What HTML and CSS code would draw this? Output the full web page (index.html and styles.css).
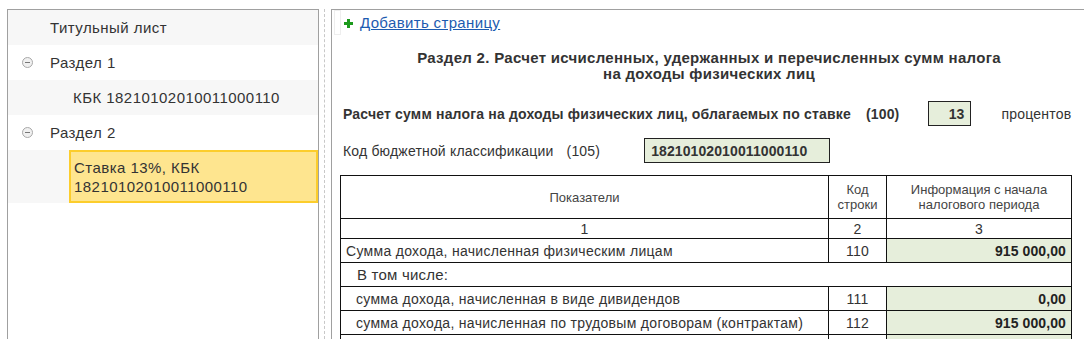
FILE: index.html
```html
<!DOCTYPE html>
<html lang="ru">
<head>
    <meta charset="UTF-8">
    <title>Раздел 2</title>
    <link rel="stylesheet" href="styles.css">
</head>
<body>
    <div class="page">
        <div class="tree">
            <div class="tree-row shaded"><span class="label">Титульный лист</span></div>
            <div class="tree-row"><span class="toggle"></span><span class="label">Раздел 1</span></div>
            <div class="tree-row shaded child"><span class="label">КБК 18210102010011000110</span></div>
            <div class="tree-row"><span class="toggle"></span><span class="label">Раздел 2</span></div>
            <div class="tree-row shaded child selected-row">
                <div class="selected">Ставка 13%, КБК<br>18210102010011000110</div>
            </div>
        </div>
        <div class="splitter"><div class="dash"></div></div>
        <div class="form">
            <div class="toolbar">
                <div class="grip"></div>
                <span class="plus"></span>
                <a href="#" class="add-link">Добавить страницу</a>
            </div>
            <h2 class="form-title">Раздел 2. Расчет исчисленных, удержанных и перечисленных сумм налога<br>на доходы физических лиц</h2>
            <div class="field-line rate">
                <span class="bold">Расчет сумм налога на доходы физических лиц, облагаемых по ставке</span>
                <span class="bold code">(100)</span>
                <span class="input small">13</span>
                <span class="unit">процентов</span>
            </div>
            <div class="field-line kbk">
                <span>Код бюджетной классификации</span>
                <span class="code">(105)</span>
                <span class="input wide">18210102010011000110</span>
            </div>
            <table class="report">
                <thead>
                    <tr class="head">
                        <th class="c1">Показатели</th>
                        <th class="c2">Код<br>строки</th>
                        <th class="c3">Информация с начала<br>налогового периода</th>
                    </tr>
                    <tr class="nums">
                        <td>1</td>
                        <td>2</td>
                        <td>3</td>
                    </tr>
                </thead>
                <tbody>
                    <tr>
                        <td class="name">Сумма дохода, начисленная физическим лицам</td>
                        <td class="num">110</td>
                        <td class="value">915 000,00</td>
                    </tr>
                    <tr>
                        <td class="group" colspan="3">В том числе:</td>
                    </tr>
                    <tr>
                        <td class="name sub">сумма дохода, начисленная в виде дивидендов</td>
                        <td class="num">111</td>
                        <td class="value">0,00</td>
                    </tr>
                    <tr>
                        <td class="name sub">сумма дохода, начисленная по трудовым договорам (контрактам)</td>
                        <td class="num">112</td>
                        <td class="value">915 000,00</td>
                    </tr>
                    <tr>
                        <td class="name sub">&nbsp;</td>
                        <td class="num"></td>
                        <td class="value"></td>
                    </tr>
                </tbody>
            </table>
        </div>
    </div>
</body>
</html>
```

FILE: styles.css
```css
body {
    margin: 0;
    background: #fff;
    font-family: "Liberation Sans", Arial, sans-serif;
    color: #333;
    overflow: hidden;
}
.page {
    display: flex;
    height: 339px;
    padding: 9px 0 0 7px;
    box-sizing: border-box;
}
.tree {
    width: 312px;
    flex: none;
    border: 1px solid #a0a0a0;
    border-bottom: none;
    box-sizing: border-box;
}
.tree-row {
    display: flex;
    align-items: center;
    height: 35px;
    padding-left: 42px;
    font-size: 15px;
    letter-spacing: 0.45px;
    color: #333;
    position: relative;
}
.tree-row.shaded {
    background: #f7f7f7;
}
.tree-row.child {
    padding-left: 65px;
}
.toggle {
    position: absolute;
    left: 14px;
    top: 12px;
    width: 9px;
    height: 9px;
    border: 1px solid #a8a8a8;
    border-radius: 50%;
    background: #f0f0f0;
}
.toggle::after {
    content: "";
    position: absolute;
    left: 2px;
    top: 4px;
    width: 5px;
    height: 1px;
    background: #777;
}
.tree-row.selected-row {
    height: 53px;
    padding-left: 61px;
    align-items: stretch;
}
.selected {
    flex: 1;
    background: #fee58f;
    border: 2px solid #fccd2c;
    padding: 6px 3px 4px 3px;
    line-height: 19px;
    font-size: 15px;
    color: #333;
}
.splitter {
    width: 12px;
    flex: none;
    display: flex;
    justify-content: center;
}
.dash {
    width: 0;
    border-left: 1px dashed #c8c8c8;
    margin-left: -1px;
}
.form {
    flex: 1;
    border-left: 1px solid #a0a0a0;
    border-top: 1px solid #a0a0a0;
    padding-left: 2px;
}
.toolbar {
    display: flex;
    align-items: center;
    height: 25px;
}
.grip {
    width: 5px;
    height: 23px;
    border: 1px solid #eee;
    background: #fff;
    margin-right: 3px;
    align-self: flex-start;
}
.plus {
    width: 9px;
    height: 9px;
    position: relative;
    margin-right: 7px;
    margin-top: 1px;
}
.plus::before, .plus::after {
    content: "";
    position: absolute;
    background: #1c9a1c;
}
.plus::before {
    left: 0;
    top: 3px;
    width: 9px;
    height: 3px;
}
.plus::after {
    left: 3px;
    top: 0;
    width: 3px;
    height: 9px;
}
.add-link {
    color: #1d5bb0;
    font-size: 15px;
    letter-spacing: 0.35px;
    text-decoration: underline;
}
.form-title {
    margin: 15px 0 0 0;
    font-size: 15px;
    letter-spacing: 0.3px;
    line-height: 16px;
    text-align: center;
    color: #333;
    width: 750px;
}
.field-line {
    display: flex;
    align-items: center;
    font-size: 14px;
    letter-spacing: 0.18px;
    margin-left: 9px;
}
.field-line.rate {
    margin-top: 19px;
}
.bold {
    font-weight: bold;
}
.code {
    margin-left: 13px;
}
.rate .code {
    margin-left: 15px;
}
.input {
    border: 1px solid #222;
    background: #e6eedb;
    font-weight: bold;
    box-sizing: border-box;
    height: 25px;
    display: flex;
    align-items: center;
    padding: 0 6px;
    letter-spacing: 0.1px;
}
.input.small {
    width: 43px;
    justify-content: flex-end;
    margin-left: 29px;
}
.unit {
    margin-left: 30px;
    letter-spacing: 0.2px;
}
.field-line.kbk {
    margin-top: 12px;
}
.input.wide {
    width: 186px;
    margin-left: 44px;
}
.report {
    border-collapse: collapse;
    margin: 12px 0 0 6px;
    width: 732px;
    font-size: 14px;
    letter-spacing: 0.3px;
}
.report th, .report td {
    border: 1px solid #111;
    padding: 0 5px;
}
.report th {
    font-weight: normal;
    font-size: 13px;
    letter-spacing: 0;
    height: 42px;
    color: #444;
}
.report th.c2 {
    width: 57px;
    padding: 0;
}
.report th.c3 {
    width: 174px;
}
.report .nums td {
    text-align: center;
    height: 19px;
}
.report tbody td {
    height: 23px;
}
.report td.num {
    text-align: center;
}
.report td.value {
    background: #e6eedb;
    text-align: right;
    font-weight: bold;
    color: #222;
    letter-spacing: 0.1px;
}
.report td.group {
    padding-left: 16px;
    font-size: 15px;
    letter-spacing: 0.2px;
}
.report td.sub {
    padding-left: 15px;
}
```
